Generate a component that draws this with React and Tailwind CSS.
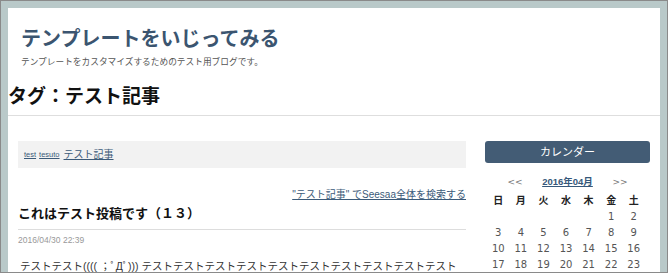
import React from "react";

const weeks = [
  ["", "", "", "", "", "1", "2"],
  ["3", "4", "5", "6", "7", "8", "9"],
  ["10", "11", "12", "13", "14", "15", "16"],
  ["17", "18", "19", "20", "21", "22", "23"],
];

const days = ["日", "月", "火", "水", "木", "金", "土"];

function Calendar() {
  return (
    <aside className="w-[165px] shrink-0 pt-[25px]">
      <div className="h-[22px] rounded-[3px] bg-[#435c75] text-white text-[11px] leading-[22px] text-center">
        カレンダー
      </div>
      <div className="ml-[4px] mt-[11px] grid grid-cols-[52px_53px_52px] w-[157px] h-[16px] leading-[16px] text-[10px] text-center whitespace-nowrap">
        <span className="text-[#777] font-['DejaVu_Sans',sans-serif] text-[9px]">&lt;&lt;</span>
        <a className="font-bold underline text-[#36587a] text-[9.5px]">2016年04月</a>
        <span className="text-[#777] font-['DejaVu_Sans',sans-serif] text-[9px]">&gt;&gt;</span>
      </div>
      {/* 曜日 + 日付 */}
      <div className="ml-[2px] mt-[3px] w-[158px] grid grid-cols-7 auto-rows-[16px] leading-[16px] text-center text-[10px]">
        {days.map((d) => (
          <span key={d} className="font-bold text-[#222]">
            {d}
          </span>
        ))}
        {weeks.flat().map((n, i) => (
          <span key={i} className="text-[#555] font-['DejaVu_Sans',sans-serif] text-[10px]">
            {n}
          </span>
        ))}
      </div>
    </aside>
  );
}

function Entry() {
  return (
    <main className="w-[448px] shrink-0 pt-[25px]">
      <div className="h-[27px] bg-[#f2f2f2] pl-[6px] flex items-center gap-[3px] text-[#3b5a79]">
        <a className="underline text-[7.5px]">test</a>
        <a className="underline text-[7.5px]">tesuto</a>
        <a className="underline text-[10px] ml-[1px]">テスト記事</a>
      </div>
      <div className="mt-[21px] text-right text-[10px] leading-[12px]">
        <a className="underline text-[#3b5a79]">"テスト記事" でSeesaa全体を検索する</a>
      </div>
      <h2 className="mt-[4px] text-[13px] leading-[17px] font-bold text-[#111]">
        これはテスト投稿です（１３）
      </h2>
      <div className="mt-[7px] border-t border-[#dddddd]" />
      <div className="mt-[5px] text-[8.5px] leading-[11px] text-[#999]">2016/04/30 22:39</div>
      <p className="mt-[13px] pl-[2px] text-[10.5px] leading-[14px] text-[#333] whitespace-nowrap">
        テストテスト(((( ；ﾟДﾟ))) テストテストテストテストテストテストテストテストテストテスト
      </p>
    </main>
  );
}

export default function App() {
  return (
    <div className="w-[668px] h-[273px] overflow-hidden border border-[#8a8a8a] bg-[#b9c9c9] px-[7px] pt-[7px] font-['Liberation_Sans','Noto_Sans_CJK_JP',sans-serif]">
      <div className="h-full bg-white">
        <header className="pl-[13px] pt-[19px]">
          <h1 className="text-[20px] leading-[24px] font-bold text-[#3b5570]">
            テンプレートをいじってみる
          </h1>
          <p className="mt-[5px] text-[8.7px] leading-[12px] text-[#555]">
            テンプレートをカスタマイズするためのテスト用ブログです。
          </p>
        </header>
        <h1 className="mt-[17px] text-[19px] leading-[24px] font-bold text-[#111]">
          タグ：テスト記事
        </h1>
        <div className="mt-[6px] border-b border-[#dedede]" />
        <div className="flex pl-[10px] gap-[19px]">
          <Entry />
          <Calendar />
        </div>
      </div>
    </div>
  );
}
